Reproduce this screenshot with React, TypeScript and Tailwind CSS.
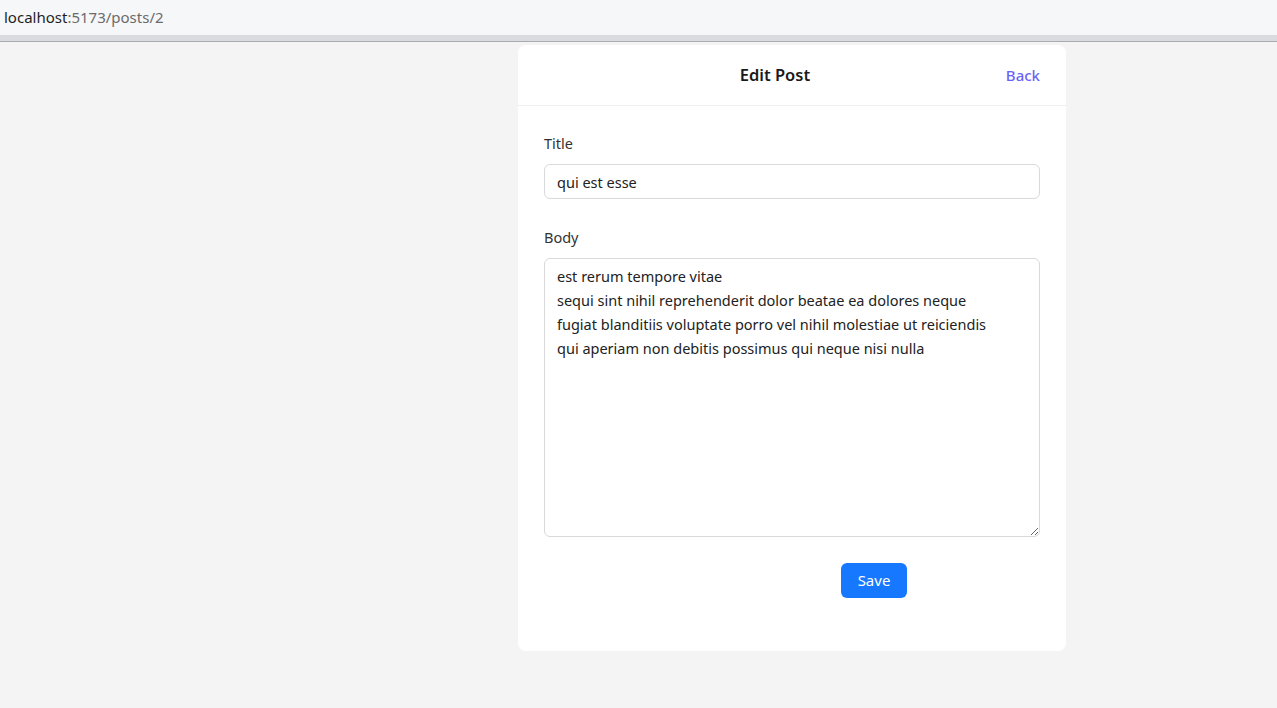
import React, { useState } from 'react';

const font = { fontFamily: '"Noto Sans", "Open Sans", sans-serif' };

const App: React.FC = () => {
  const [title, setTitle] = useState('qui est esse');
  const [body, setBody] = useState(
    'est rerum tempore vitae\nsequi sint nihil reprehenderit dolor beatae ea dolores neque\nfugiat blanditiis voluptate porro vel nihil molestiae ut reiciendis\nqui aperiam non debitis possimus qui neque nisi nulla'
  );

  return (
    <div className="min-h-[708px] bg-[#f4f4f4] text-[#222]" style={font}>
      {/* Address bar */}
      <div className="h-[35px] bg-[#f6f7f8] flex items-center px-[4px] text-[15px]">
        <span className="text-[#1f1f1f]">localhost</span>
        <span className="text-[#6b6b6b]">:5173/posts/2</span>
      </div>
      <div className="h-[7px] bg-[#dadbde] border-b border-[#a9abae]"></div>

      <div className="flex pl-[518px] pt-[3px]">
        <div className="w-[548px] bg-white rounded-lg">
          {/* Header */}
          <div className="h-[61px] px-[26px] flex items-center justify-between border-b border-[#eeeeee]">
            <div></div>
            <h1 className="text-[16.5px] font-semibold text-[#1a1a1a]">Edit Post</h1>
            <button className="text-[15px] font-medium text-[#6b63f6]">Back</button>
          </div>

          {/* Form */}
          <div className="px-[26px] pt-[26px] pb-[53px]">
            <label className="block text-[14.5px] text-[#333] leading-[22px]">Title</label>
            <input
              value={title}
              onChange={(e) => setTitle(e.target.value)}
              className="mt-[10px] w-full h-[35px] px-[12px] border border-[#d9d9d9] rounded-md text-[14.5px] text-[#222] outline-none"
            />

            <label className="block mt-[27px] text-[14.5px] text-[#333] leading-[22px]">Body</label>
            <textarea
              value={body}
              onChange={(e) => setBody(e.target.value)}
              className="mt-[10px] w-full h-[279px] px-[12px] py-[5px] border border-[#d9d9d9] rounded-md text-[14.5px] leading-[24px] text-[#222] outline-none resize-y"
            />

            <div className="mt-[20px]">
              <button className="ml-[297px] w-[66px] h-[35px] bg-[#1677ff] text-white text-[15px] rounded-md">
                Save
              </button>
            </div>
          </div>
        </div>
      </div>
    </div>
  );
};

export default App;
